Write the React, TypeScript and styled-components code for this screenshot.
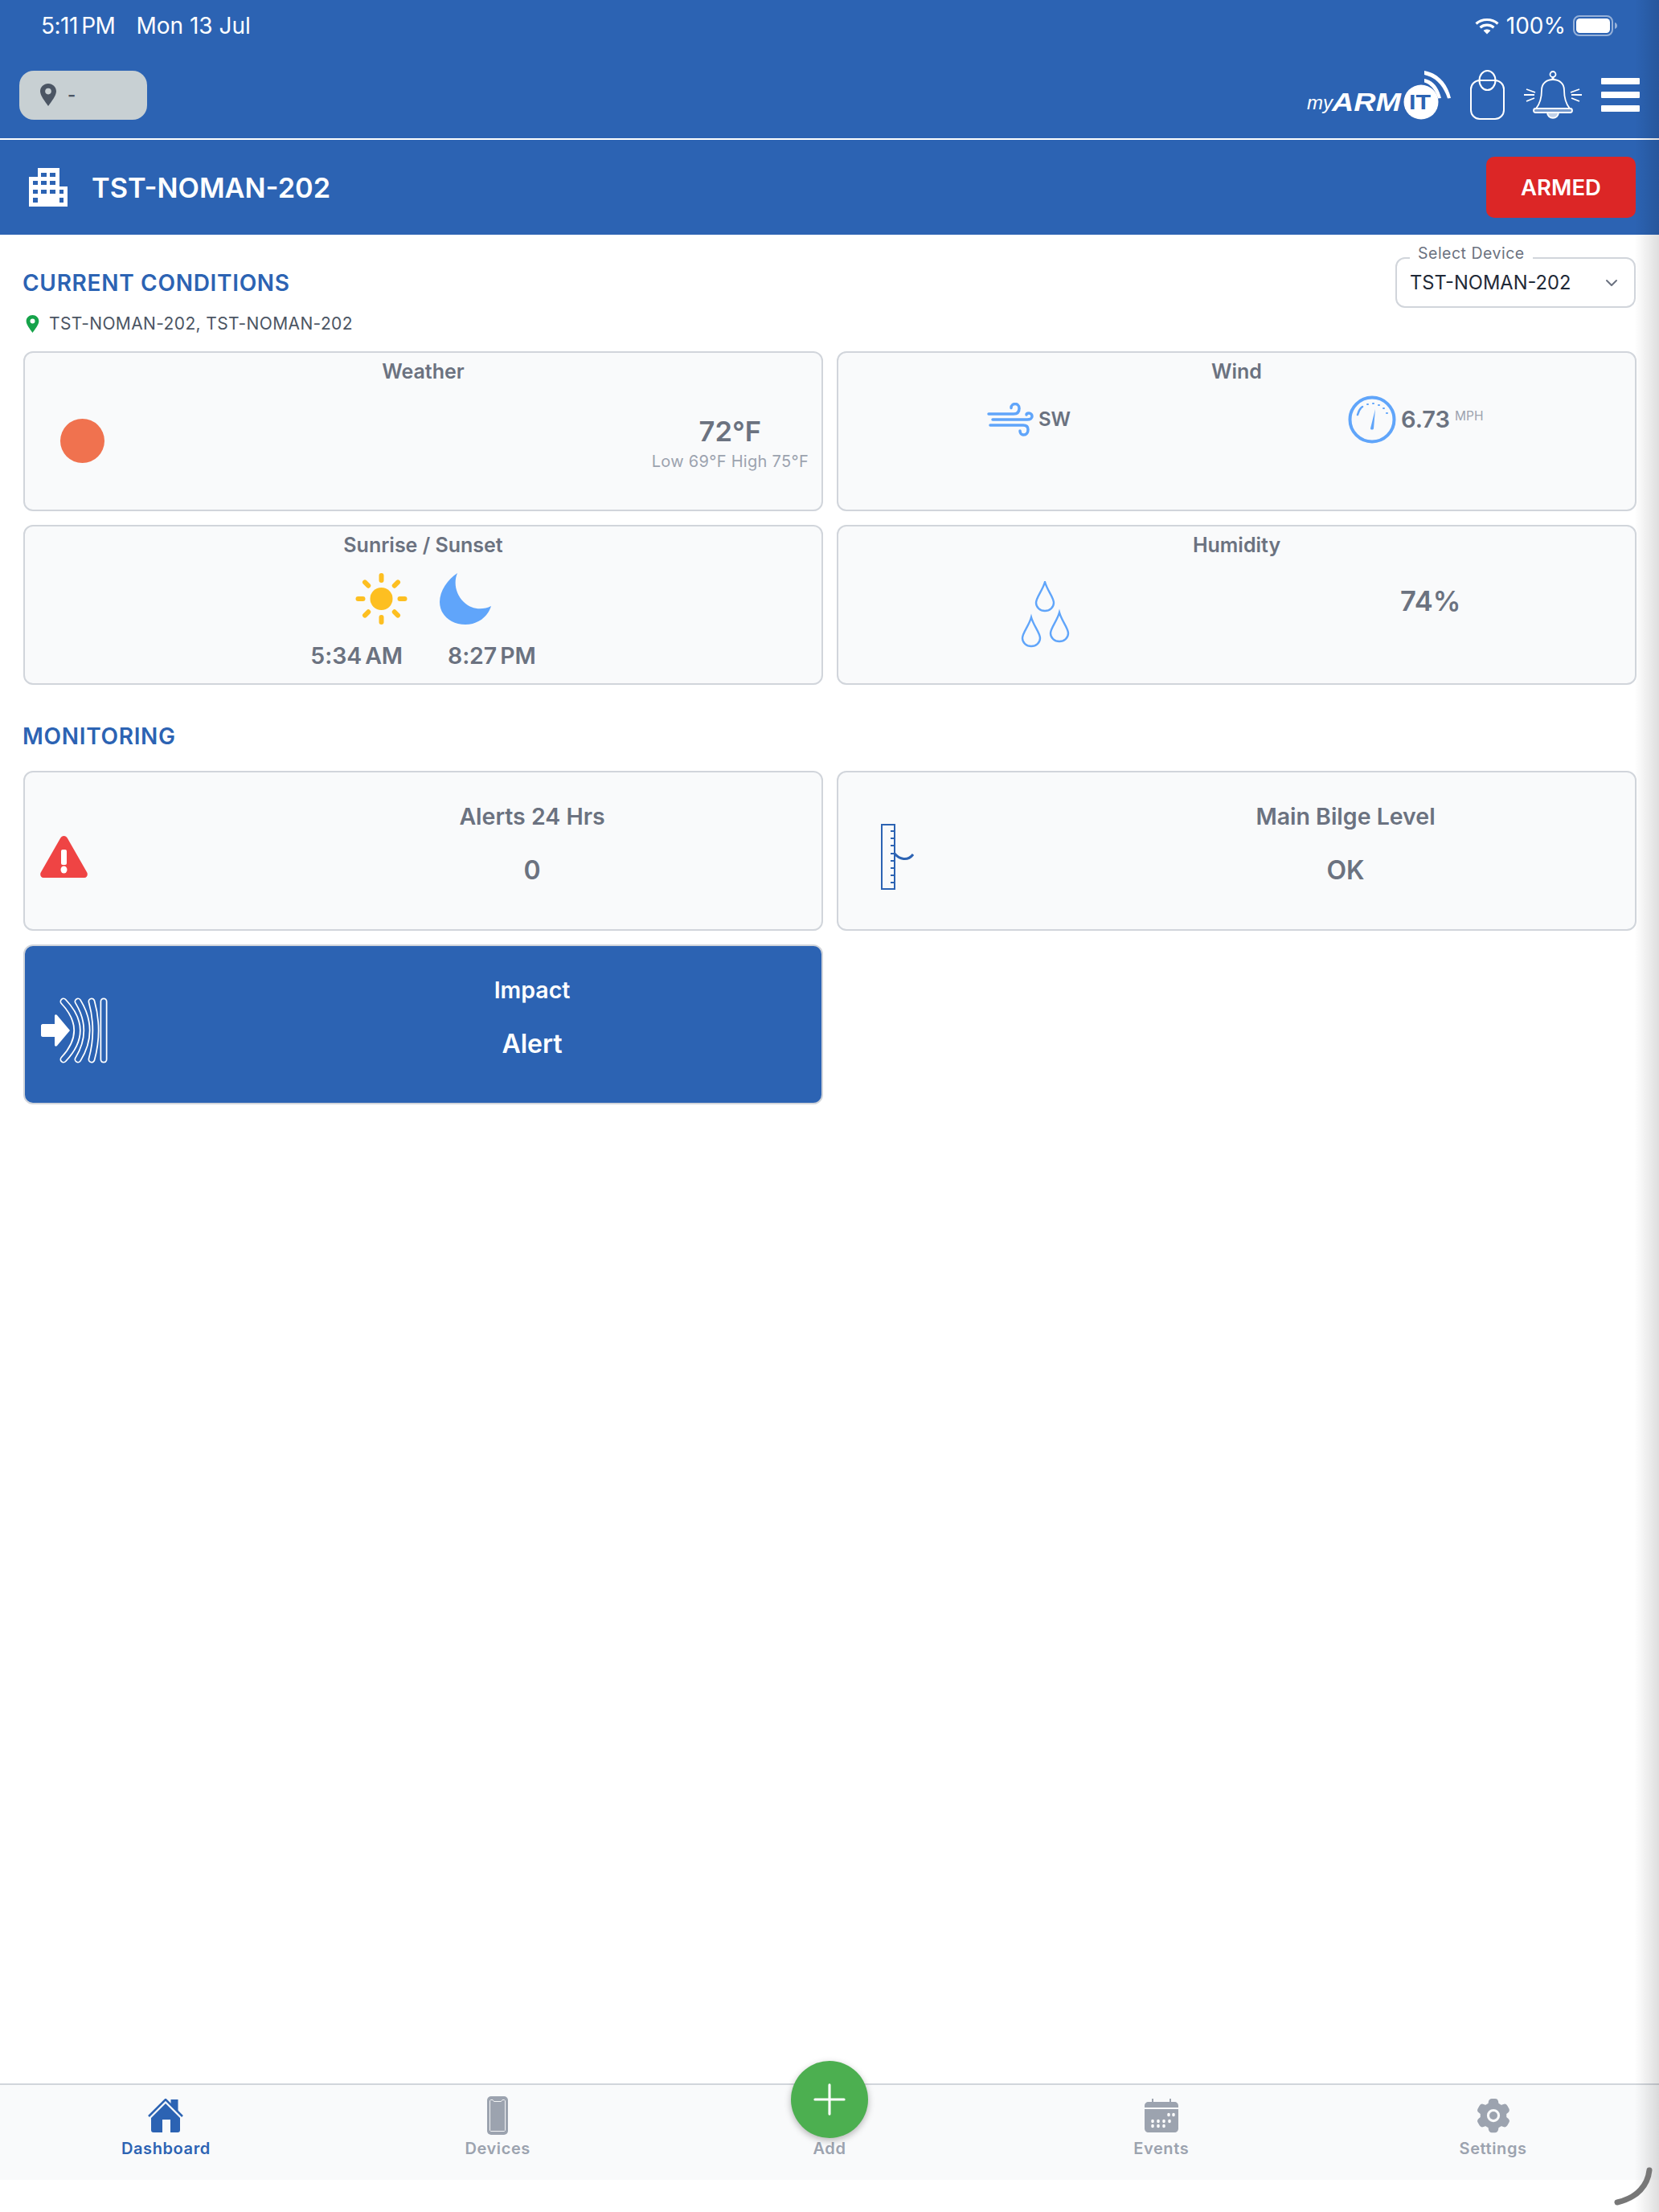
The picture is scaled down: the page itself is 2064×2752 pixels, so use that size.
import React from "react"
import styled, { createGlobalStyle } from "styled-components"
import { ChevronDown, Plus } from "lucide-react"
import { HiCog6Tooth } from "react-icons/hi2"

const blue = "#2c63b3"
const sky = "#60a5fa"
const muted = "#6b7280"
const faint = "#9ca3af"

const GlobalStyle = createGlobalStyle`
	html, body {
		margin: 0;
		padding: 0;
		background: #fff;
		font-family: Inter, "Noto Sans", sans-serif;
	}
	* {
		box-sizing: border-box;
	}
	svg {
		display: block;
		flex-shrink: 0;
	}
`

const Page = styled.div`
	position: relative;
	width: 2064px;
	height: 2752px;
	overflow: hidden;
	display: flex;
	flex-direction: column;
	background: #fff;
`

const EdgeShadow = styled.div`
	position: absolute;
	top: 0;
	right: 0;
	bottom: 0;
	width: 30px;
	background: linear-gradient(to right, rgba(0, 0, 0, 0), rgba(0, 0, 0, 0.13));
	pointer-events: none;
`

const CornerMark = styled.svg`
	position: absolute;
	right: 8px;
	bottom: 8px;
`

const StatusBar = styled.div`
	height: 64px;
	padding: 0 52px 0 51px;
	background: ${blue};
	color: #fff;
	display: flex;
	align-items: center;
	justify-content: space-between;
	font-size: 28px;
	font-family: Inter, sans-serif;
`

const StatusLeft = styled.div`
	display: flex;
	gap: 26px;
`

const StatusTime = styled.span`
	letter-spacing: -0.5px;
	word-spacing: -3px;
`

const StatusRight = styled.div`
	display: flex;
	align-items: center;
	gap: 9px;
`

const NavBar = styled.div`
	height: 110px;
	padding: 0 24px;
	background: ${blue};
	border-bottom: 2px solid #fff;
	display: flex;
	align-items: center;
	justify-content: space-between;
`

const LocationPill = styled.div`
	width: 159px;
	height: 61px;
	padding-left: 26px;
	border-radius: 18px;
	background: #c8d0d3;
	color: #4b5563;
	font-size: 22px;
	font-weight: 600;
	display: flex;
	align-items: center;
	gap: 14px;
`

const NavActions = styled.div`
	display: flex;
	align-items: center;
	gap: 24px;
`

const Burger = styled.div`
	width: 48px;
	display: flex;
	flex-direction: column;
	gap: 9px;
`

const BurgerBar = styled.span`
	height: 8px;
	border-radius: 1px;
	background: #fff;
`

const SiteBar = styled.div`
	height: 118px;
	padding: 0 29px 0 36px;
	background: ${blue};
	display: flex;
	align-items: center;
	justify-content: space-between;
`

const SiteName = styled.div`
	display: flex;
	align-items: center;
	gap: 30px;
	color: #fff;
	font-size: 34.3px;
	font-weight: 600;
`

const ArmedButton = styled.button`
	width: 186px;
	height: 76px;
	border: 0;
	border-radius: 10px;
	background: #dc2626;
	color: #fff;
	font-family: inherit;
	font-size: 27.5px;
	font-weight: 600;
`

const Main = styled.main`
	flex: 1;
	padding: 0 29px;
`

const ConditionsHead = styled.div`
	display: flex;
	justify-content: space-between;
	align-items: flex-start;
	height: 145px;
`

const HeadLeft = styled.div`
	padding-top: 43px;
`

const SectionTitle = styled.h2`
	margin: 0 0 0 -1px;
	color: ${blue};
	font-size: 28px;
	line-height: 34px;
	font-weight: 600;
	letter-spacing: 0.7px;
`

const LocationLine = styled.div`
	margin-top: 19px;
	display: flex;
	align-items: center;
	gap: 12px;
	padding-left: 3px;
	color: #4b5563;
	font-size: 21px;
	line-height: 30px;
	letter-spacing: 0.38px;
`

const SelectBox = styled.div`
	position: relative;
	margin-top: 28px;
	width: 299px;
	height: 63px;
	padding: 0 16px 0 16px;
	border: 2px solid #d1d5db;
	border-radius: 12px;
	display: flex;
	align-items: center;
	justify-content: space-between;
	color: #1f2937;
	font-size: 23.7px;
`

const SelectLabel = styled.span`
	position: absolute;
	left: 16px;
	top: -20px;
	padding: 0 10px;
	background: linear-gradient(to bottom, transparent 0 18px, #fff 18px);
	color: ${muted};
	font-size: 19.5px;
	line-height: 26px;
	letter-spacing: 0.5px;
`

const CardGrid = styled.div`
	display: grid;
	grid-template-columns: 995px 995px;
	grid-auto-rows: 199px;
	column-gap: 17px;
	row-gap: 17px;
`

const Card = styled.div`
	padding: 6px 16px 8px;
	border: 2px solid #d1d5db;
	border-radius: 12px;
	background: #f9fafb;
	color: ${muted};
`

const CardTitle = styled.div`
	padding-bottom: 2px;
	text-align: center;
	font-size: 25px;
	line-height: 34px;
	font-weight: 600;
`

const WeatherBody = styled.div`
	display: flex;
	justify-content: space-between;
	align-items: flex-start;
	padding-left: 28px;
`

const WeatherDot = styled.div`
	width: 55px;
	height: 55px;
	margin-top: 40px;
	border-radius: 50%;
	background: #f0724f;
`

const TempBlock = styled.div`
	margin-top: 36px;
	text-align: center;
`

const TempValue = styled.div`
	font-size: 34.5px;
	line-height: 40px;
	font-weight: 600;
`

const TempRange = styled.div`
	margin-top: 2px;
	color: ${faint};
	font-size: 20px;
	line-height: 30px;
	letter-spacing: 0.3px;
`

const SunIcons = styled.div`
	margin-top: 16px;
	display: flex;
	justify-content: center;
	gap: 40px;
`

const SunTimes = styled.div`
	margin-top: 21px;
	display: flex;
	justify-content: center;
	gap: 56px;
	font-size: 28.500px;
	line-height: 36px;
	font-weight: 600;
	letter-spacing: -0.1px;
	word-spacing: -3px;
`

const MetricRow = styled.div`
	margin-top: 11px;
	height: 59px;
	display: flex;
	align-items: center;
`

const MetricGroup = styled.div<{ $left: number }>`
	margin-left: ${p => p.$left}px;
	display: flex;
	align-items: center;
	gap: 6px;
`

const WindLabel = styled.span`
	font-size: 24px;
	font-weight: 600;
`

const SpeedValue = styled.span`
	font-size: 29px;
	font-weight: 600;
`

const SpeedUnit = styled.span`
	margin-left: 0;
	margin-bottom: 8px;
	color: ${faint};
	font-size: 15.5px;
`

const HumidityRow = styled.div`
	display: flex;
	align-items: flex-start;
	padding-left: 211px;
`

const DropsWrap = styled.div`
	margin-top: 26px;
`

const HumidityValue = styled.div`
	margin: 31px 0 0 411px;
	font-size: 34.5px;
	line-height: 40px;
	font-weight: 600;
`

const MonitoringTitle = styled(SectionTitle)`
	margin: 47px 0 26px -1px;
`

const MonitorCard = styled.div<{ $active?: boolean }>`
	display: grid;
	grid-template-columns: 270px 1fr;
	border: 2px solid #d1d5db;
	border-radius: 12px;
	background: ${p => (p.$active ? blue : "#f9fafb")};
	color: ${p => (p.$active ? "#fff" : muted)};
`

const MonitorIcon = styled.div<{ $indent: number }>`
	padding: 14px 0 0 ${p => p.$indent}px;
	display: flex;
	align-items: center;
`

const MonitorText = styled.div`
	padding-top: 38px;
	padding-left: 1px;
	text-align: center;
`

const MonitorTitle = styled.div`
	font-size: 28.5px;
	line-height: 34px;
	font-weight: 600;
`

const MonitorValue = styled.div`
	margin-top: 28px;
	font-size: 32px;
	line-height: 44px;
	font-weight: 600;
`

const TabBar = styled.nav`
	position: relative;
	height: 120px;
	border-top: 2px solid #d1d5db;
	background: #f9fafb;
	display: grid;
	grid-template-columns: repeat(5, 1fr);
`

const Tab = styled.div<{ $active?: boolean }>`
	position: relative;
	padding-top: 12px;
	display: flex;
	flex-direction: column;
	align-items: center;
	color: ${p => (p.$active ? blue : faint)};
`

const TabIcon = styled.div`
	height: 52px;
	display: flex;
	align-items: center;
	justify-content: center;
`

const TabLabel = styled.span`
	margin-top: 1px;
	font-size: 20px;
	line-height: 28px;
	font-weight: 600;
	letter-spacing: 0.6px;
`

const AddButton = styled.div`
	position: absolute;
	top: -30px;
	left: 50%;
	width: 96px;
	height: 96px;
	margin-left: -48px;
	border-radius: 50%;
	background: #4caf50;
	color: #fff;
	display: flex;
	align-items: center;
	justify-content: center;
	box-shadow: 0 3px 8px rgba(0, 0, 0, 0.28);
`

const BottomGap = styled.div`
	height: 40px;
	background: #fff;
`

const GearWrap = styled.div`
	position: relative;
	width: 52px;
	height: 52px;
	color: ${faint};
`

const GearDot = styled.span`
	position: absolute;
	left: 21px;
	top: 21px;
	width: 10px;
	height: 10px;
	border-radius: 50%;
	background: ${faint};
`

function PinIcon({ fill, hole, w, h }: { fill: string; hole: string; w: number; h: number }) {
	return (
		<svg width={w} height={h} viewBox="0 0 20 28">
			<path d="M10 0C4.5 0 0 4.3 0 9.6 0 15 6 22.5 10 28c4-5.5 10-13 10-18.4C20 4.3 15.5 0 10 0z" fill={fill} />
			<circle cx="10" cy="9.6" r="3.8" fill={hole} />
		</svg>
	)
}

function WifiIcon() {
	return (
		<svg width="30" height="21" viewBox="0 0 30 21" fill="none" stroke="#fff" strokeWidth="3.2">
			<path d="M1.5 7.5C9 .8 21 .8 28.5 7.5" />
			<path d="M6.5 12.2c4.8-4 12.2-4 17 0" />
			<path d="M15 20.5l-4.4-4.4c2.4-2 6.4-2 8.8 0z" fill="#fff" stroke="none" />
		</svg>
	)
}

function BatteryIcon() {
	return (
		<svg width="55" height="26" viewBox="0 0 55 26">
			<rect x="1" y="1" width="48" height="24" rx="7" fill="none" stroke="#fff" strokeOpacity="0.5" strokeWidth="2" />
			<rect x="4" y="4" width="42" height="18" rx="4.5" fill="#fff" />
			<path d="M52 9c2 .6 3 2.2 3 4s-1 3.4-3 4z" fill="#fff" fillOpacity="0.5" />
		</svg>
	)
}

function Logo() {
	return (
		<svg width="179" height="62" viewBox="0 0 179 62">
			<text x="0" y="49" fill="#fff" fontFamily="Liberation Sans, sans-serif" fontStyle="italic" fontWeight="400" fontSize="23" textLength="32" lengthAdjust="spacingAndGlyphs">
				my
			</text>
			<text x="31" y="51" fill="#fff" fontFamily="Liberation Sans, sans-serif" fontStyle="italic" fontWeight="700" fontSize="31" textLength="86" lengthAdjust="spacingAndGlyphs">
				ARM
			</text>
			<circle cx="142" cy="40" r="21.5" fill="#fff" />
			<text x="127" y="49" fill={blue} fontFamily="Liberation Sans, sans-serif" fontWeight="700" fontSize="25" textLength="27" lengthAdjust="spacingAndGlyphs">
				IT
			</text>
			<path d="M146 1c17 3 29 16 33 34l-4 .5C170 20 160 9 146 6z" fill="#fff" />
			<path d="M146 11c11 2 18 11 21 24l-4 .5C160 25 154 18 146 15.500z" fill="#fff" />
		</svg>
	)
}

function TagIcon() {
	return (
		<svg width="43" height="62" viewBox="0 0 43 62" fill="none" stroke="#fff" strokeWidth="2">
			<rect x="1" y="13" width="41" height="48" rx="11" />
			<ellipse cx="21.500" cy="13" rx="10" ry="12" />
		</svg>
	)
}

function BellIcon() {
	return (
		<svg width="72" height="60" viewBox="0 0 72 60" fill="none" stroke="#fff" strokeWidth="1.8">
			<circle cx="36" cy="4.500" r="3.500" />
			<path d="M36 8v4" strokeWidth="3" />
			<path d="M15 47c5-6 7-13 7-23 0-8 6-13 14-13s14 5 14 13c0 10 2 17 7 23" />
			<rect x="12" y="47" width="48" height="5" rx="2.500" fill="#fff" fillOpacity="0.35" />
			<path d="M29 52c0 9 14 9 14 0z" fill="#fff" fillOpacity="0.7" />
			<path d="M3 23l11 4M0 30h13M3 38l10-4M69 23l-11 4M72 30H59M69 38l-10-4" />
		</svg>
	)
}

function BuildingIcon() {
	return (
		<svg width="48" height="48" viewBox="0 0 48 48">
			<path
				fillRule="evenodd"
				fill="#fff"
				d="M11 0H38V23H48V48H0V11H11ZM15 6V11H22V6ZM26 6V11H33V6ZM5 16V21H11V16ZM15 16V21H22V16ZM26 16V21H33V16ZM5 27V32H11V27ZM15 27V32H22V27ZM26 27V32H33V27ZM38 27V32H43V27ZM5 37V43H11V37ZM38 37V43H43V37Z"
			/>
		</svg>
	)
}

function SunIcon() {
	const rays = [0, 45, 90, 135, 180, 225, 270, 315]
	return (
		<svg width="65" height="64" viewBox="-32.500 -32 65 64">
			<circle r="14" fill="#fdbf21" />
			{rays.map(a => (
				<rect key={a} x="-3" y="-32" width="6" height="12" rx="3" fill="#fdbf21" transform={`rotate(${a})`} />
			))}
		</svg>
	)
}

function MoonIcon() {
	return (
		<svg width="64" height="64" viewBox="0 0 64 64">
			<path d="M22 0C10 8 0 22 0 36c0 16 14 28 32 28 16 0 28-10 32-23-10 5-24 5-34-5C20 26 17 12 22 0z" fill={sky} />
		</svg>
	)
}

function WindIcon() {
	return (
		<svg width="58" height="42" viewBox="0 0 58 42" fill="none" stroke={sky} strokeWidth="3.500" strokeLinecap="round">
			<path d="M2 14h31c5 0 7-3 7-7s-3-5.500-5-5.500-5 1.500-5 5" />
			<path d="M7 21h43c4 0 6-2 6-4s-1.500-4-4-4-3 1-3 2" />
			<path d="M4 28h41c4 0 6 2 6 5.500S49 40 45.500 40 41 37 41 35" />
		</svg>
	)
}

function GaugeIcon() {
	return (
		<svg width="60" height="60" viewBox="0 0 60 60" fill="none" stroke={sky}>
			<circle cx="30" cy="30" r="27.500" strokeWidth="4" />
			<path d="M12 24c1-4 3-8 6-10" strokeWidth="2.500" strokeLinecap="round" />
			<path d="M24 11h1M31 10h1M38 12h1M44 16h1M48 22h1" strokeWidth="2" strokeLinecap="round" />
			<path d="M34 17l-2 24c-.2 2-4 2-4 0z" fill={sky} stroke="none" />
		</svg>
	)
}

function DropsIcon() {
	const drop = "M13 1C10 12 2 20 2 27a11 10 0 0 0 22 0C24 20 16 12 13 1z"
	return (
		<svg width="61" height="83" viewBox="0 0 61 83" fill="none" stroke={sky} strokeWidth="2.400">
			<path d={drop} transform="translate(17 0)" />
			<path d={drop} transform="translate(0 44)" />
			<path d={drop} transform="translate(35 38)" />
		</svg>
	)
}

function AlertIcon() {
	return (
		<svg width="59" height="52" viewBox="0 0 59 52">
			<path d="M25 3c2-4 7-4 9 0l24 42c2 3 0 7-3 7H4c-3 0-5-4-3-7z" fill="#ef4444" />
			<rect x="26" y="17" width="7" height="19" rx="2" fill="#fff" />
			<ellipse cx="29.500" cy="42" rx="4" ry="4.500" fill="#fff" />
		</svg>
	)
}

function RulerIcon() {
	const ticks = [9, 18, 27, 37, 46, 55, 64, 73]
	return (
		<svg width="41" height="82" viewBox="0 0 41 82" fill="none" stroke={blue}>
			<rect x="1" y="1" width="16" height="80" strokeWidth="2" />
			{ticks.map(y => (
				<path key={y} d={`M12 ${y}h5`} strokeWidth="2" />
			))}
			<path d="M17 37c6 7 16 10 23 1" strokeWidth="3" />
		</svg>
	)
}

function ImpactIcon() {
	const bands = ["M28 5Q62 41 28 77", "M46 5Q68 41 46 77", "M63 5Q73 41 63 77", "M78 5V77"]
	return (
		<svg width="83" height="82" viewBox="0 0 83 82" fill="none" strokeLinecap="round">
			{bands.map(d => (
				<React.Fragment key={d}>
					<path d={d} stroke="#fff" strokeWidth="9" />
					<path d={d} stroke={blue} strokeWidth="5.500" />
				</React.Fragment>
			))}
			<path d="M0 35c0-1 1-2 2-2h15V23c0-2 2-2 3-1l16 19-16 19c-1 1-3 1-3-1V49H2c-1 0-2-1-2-2z" fill="#fff" />
		</svg>
	)
}

function HomeIcon() {
	return (
		<svg width="44" height="42" viewBox="0 0 44 42">
			<path d="M28.500 1h9v15h-1.500L28.500 8z" fill={blue} />
			<path d="M1 22L22 1l21 21" fill="none" stroke={blue} strokeWidth="2.500" />
			<path d="M22 6l18 18v15c0 2-1 3-3 3H28V26H18v16H7c-2 0-3-1-3-3V24z" fill={blue} />
		</svg>
	)
}

function DeviceIcon() {
	return (
		<svg width="26" height="48" viewBox="0 0 26 48">
			<rect width="26" height="48" rx="5" fill={faint} />
			<path d="M3.500 6C3.500 5 4 4.500 5 4.500h2l1.500 2h9l1.500-2h2c1 0 1.500.5 1.500 1.500v36c0 1-.5 1.500-1.500 1.500H5c-1 0-1.500-.5-1.500-1.500z" fill="none" stroke="#f3f4f6" strokeWidth="1" />
		</svg>
	)
}

function CalendarIcon() {
	const dots = [
		[30, 20], [36, 20],
		[10, 28], [17, 28], [24, 28], [31, 28],
		[10, 34], [17, 34], [24, 34],
	]
	return (
		<svg width="42" height="42" viewBox="0 0 42 42">
			<path d="M9 0h2v4h20V0h2v4h4c3 0 5 2 5 5v2H0V9c0-3 2-5 5-5h4z" fill={faint} />
			<path d="M0 13h42v24c0 3-2 5-5 5H5c-3 0-5-2-5-5z" fill={faint} />
			{dots.map(([x, y]) => (
				<ellipse key={`${x}-${y}`} cx={x} cy={y} rx="1.800" ry="2.200" fill="#fff" />
			))}
		</svg>
	)
}

export default function App() {
	return (
		<Page>
			<GlobalStyle />
			<StatusBar>
				<StatusLeft>
					<StatusTime>5:11 PM</StatusTime>
					<span>Mon 13 Jul</span>
				</StatusLeft>
				<StatusRight>
					<WifiIcon />
					<span>100%</span>
					<BatteryIcon />
				</StatusRight>
			</StatusBar>

			<NavBar>
				<LocationPill>
					<PinIcon fill="#4b5563" hole="#c8d0d3" w={20} h={28} />
					<span>-</span>
				</LocationPill>
				<NavActions>
					<Logo />
					<TagIcon />
					<BellIcon />
					<Burger>
						<BurgerBar />
						<BurgerBar />
						<BurgerBar />
					</Burger>
				</NavActions>
			</NavBar>

			<SiteBar>
				<SiteName>
					<BuildingIcon />
					<span>TST-NOMAN-202</span>
				</SiteName>
				<ArmedButton>ARMED</ArmedButton>
			</SiteBar>

			<Main>
				<ConditionsHead>
					<HeadLeft>
						<SectionTitle>CURRENT CONDITIONS</SectionTitle>
						<LocationLine>
							<PinIcon fill="#16a34a" hole="#fff" w={17} h={22} />
							<span>TST-NOMAN-202, TST-NOMAN-202</span>
						</LocationLine>
					</HeadLeft>
					<SelectBox>
						<SelectLabel>Select Device</SelectLabel>
						<span>TST-NOMAN-202</span>
						<ChevronDown size={24} color="#6b7280" />
					</SelectBox>
				</ConditionsHead>

				<CardGrid>
					<Card>
						<CardTitle>Weather</CardTitle>
						<WeatherBody>
							<WeatherDot />
							<TempBlock>
								<TempValue>72°F</TempValue>
								<TempRange>Low 69°F High 75°F</TempRange>
							</TempBlock>
						</WeatherBody>
					</Card>
					<Card>
						<CardTitle>Wind</CardTitle>
						<MetricRow>
							<MetricGroup $left={169}>
								<WindIcon />
								<WindLabel>SW</WindLabel>
							</MetricGroup>
							<MetricGroup $left={345}>
								<GaugeIcon />
								<SpeedValue>6.73</SpeedValue>
								<SpeedUnit>MPH</SpeedUnit>
							</MetricGroup>
						</MetricRow>
					</Card>
					<Card>
						<CardTitle>Sunrise / Sunset</CardTitle>
						<SunIcons>
							<SunIcon />
							<MoonIcon />
						</SunIcons>
						<SunTimes>
							<span>5:34 AM</span>
							<span>8:27 PM</span>
						</SunTimes>
					</Card>
					<Card>
						<CardTitle>Humidity</CardTitle>
						<HumidityRow>
							<DropsWrap>
								<DropsIcon />
							</DropsWrap>
							<HumidityValue>74%</HumidityValue>
						</HumidityRow>
					</Card>
				</CardGrid>

				<MonitoringTitle>MONITORING</MonitoringTitle>

				<CardGrid>
					<MonitorCard>
						<MonitorIcon $indent={19}>
							<AlertIcon />
						</MonitorIcon>
						<MonitorText>
							<MonitorTitle>Alerts 24 Hrs</MonitorTitle>
							<MonitorValue>0</MonitorValue>
						</MonitorText>
					</MonitorCard>
					<MonitorCard>
						<MonitorIcon $indent={53}>
							<RulerIcon />
						</MonitorIcon>
						<MonitorText>
							<MonitorTitle>Main Bilge Level</MonitorTitle>
							<MonitorValue>OK</MonitorValue>
						</MonitorText>
					</MonitorCard>
					<MonitorCard $active>
						<MonitorIcon $indent={20}>
							<ImpactIcon />
						</MonitorIcon>
						<MonitorText>
							<MonitorTitle>Impact</MonitorTitle>
							<MonitorValue>Alert</MonitorValue>
						</MonitorText>
					</MonitorCard>
				</CardGrid>
			</Main>

			<TabBar>
				<Tab $active>
					<TabIcon>
						<HomeIcon />
					</TabIcon>
					<TabLabel>Dashboard</TabLabel>
				</Tab>
				<Tab>
					<TabIcon>
						<DeviceIcon />
					</TabIcon>
					<TabLabel>Devices</TabLabel>
				</Tab>
				<Tab>
					<AddButton>
						<Plus size={62} strokeWidth={1.2} />
					</AddButton>
					<TabIcon />
					<TabLabel>Add</TabLabel>
				</Tab>
				<Tab>
					<TabIcon>
						<CalendarIcon />
					</TabIcon>
					<TabLabel>Events</TabLabel>
				</Tab>
				<Tab>
					<TabIcon>
						<GearWrap>
							<HiCog6Tooth size={52} />
							<GearDot />
						</GearWrap>
					</TabIcon>
					<TabLabel>Settings</TabLabel>
				</Tab>
			</TabBar>
			<BottomGap />

			<EdgeShadow />
			<CornerMark width="48" height="48" viewBox="0 0 48 48" fill="none">
				<path d="M44 4C42 22 30 38 4 44" stroke="#777" strokeWidth="7" strokeLinecap="round" />
			</CornerMark>
		</Page>
	)
}
